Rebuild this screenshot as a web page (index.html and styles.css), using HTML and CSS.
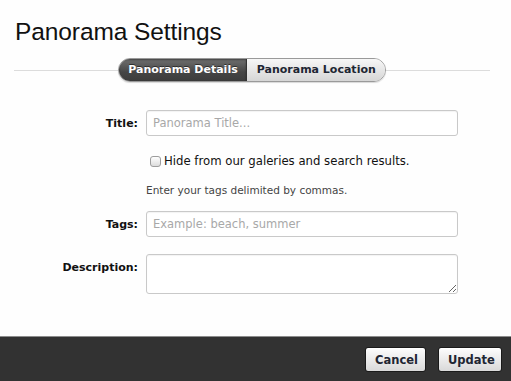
FILE: index.html
```html
<!DOCTYPE html>
<html>
<head>
<meta charset="utf-8">
<link rel="stylesheet" href="styles.css">
</head>
<body>
<div class="dialog">
  <div class="main">
    <h1 class="title">Panorama Settings</h1>
    <div class="tabrow">
      <div class="line"></div>
      <div class="tabs">
        <div class="tab active">Panorama Details</div>
        <div class="tab">Panorama Location</div>
      </div>
      <div class="line"></div>
    </div>
    <form class="form">
      <label class="lbl lbl-mid">Title:</label>
      <input class="field" type="text" placeholder="Panorama Title...">
      <div></div>
      <label class="check"><input type="checkbox" class="cb"><span>Hide from our galeries and search results.</span></label>
      <div></div>
      <div class="hint">Enter your tags delimited by commas.</div>
      <label class="lbl lbl-mid">Tags:</label>
      <input class="field" type="text" placeholder="Example: beach, summer">
      <label class="lbl lbl-top">Description:</label>
      <textarea class="field area"></textarea>
    </form>
  </div>
  <div class="footer">
    <button class="btn" type="button">Cancel</button>
    <button class="btn" type="button">Update</button>
  </div>
</div>
</body>
</html>
```

FILE: styles.css
```css
html, body {
  margin: 0;
  padding: 0;
  background: #fefefe;
}
.dialog {
  width: 511px;
  height: 381px;
  display: flex;
  flex-direction: column;
  overflow: hidden;
}
.main {
  flex: 1;
  background: #fefefe;
  display: flex;
  flex-direction: column;
}
.title {
  margin: 0;
  padding: 17px 0 0 15px;
  font-family: "Liberation Sans", Arial, sans-serif;
  font-weight: normal;
  font-size: 24.5px;
  line-height: 30px;
  color: #111;
  letter-spacing: -0.1px;
}
.tabrow {
  display: flex;
  align-items: center;
  margin-top: 11px;
  padding: 0 21px 0 14px;
}
.line {
  flex: 1;
  height: 1px;
  background: #dcdcdc;
}
.tabs {
  display: flex;
  height: 24px;
  border-radius: 12px;
  overflow: hidden;
  border: 1px solid #9a9a9a;
  box-sizing: border-box;
  box-shadow: 0 1px 1px rgba(0,0,0,0.15);
}
.tab {
  font-family: "DejaVu Sans", Verdana, sans-serif;
  font-weight: bold;
  font-size: 11px;
  line-height: 22px;
  padding: 0 9px 0 10px;
  color: #1e2633;
  background: linear-gradient(#f7f7f7, #d6d6d6);
}
.tab.active {
  color: #fff;
  background: linear-gradient(#707070, #454545 60%, #3c3c3c);
  text-shadow: 0 -1px 0 rgba(0,0,0,0.5);
  box-shadow: inset 0 1px 2px rgba(0,0,0,0.4);
  border-right: 1px solid #333;
  padding: 0 8px 0 9px;
}
.form {
  display: grid;
  grid-template-columns: 138px 312px;
  column-gap: 8px;
  margin-top: 28px;
  align-items: center;
}
.lbl {
  text-align: right;
  font-family: "DejaVu Sans", Verdana, sans-serif;
  font-weight: bold;
  font-size: 11px;
  color: #111;
}
.lbl-top {
  align-self: start;
  margin-top: 24px;
}
.field {
  box-sizing: border-box;
  width: 312px;
  height: 26px;
  margin: 0;
  border: 1px solid #c9c9c9;
  border-radius: 3px;
  padding: 0 6px;
  font-family: "DejaVu Sans", Verdana, sans-serif;
  font-size: 11.5px;
  color: #333;
  background: #fff;
  box-shadow: inset 0 1px 1px rgba(0,0,0,0.05);
  outline: none;
}
.field::placeholder {
  color: #a8a8a8;
}
.area {
  height: 40px;
  resize: vertical;
  margin-top: 17px;
  align-self: start;
}
.check {
  display: flex;
  align-items: center;
  gap: 3px;
  padding-left: 4px;
  margin-top: 18px;
  font-family: "DejaVu Sans", Verdana, sans-serif;
  font-size: 11.7px;
  color: #111;
  height: 14px;
}
.cb {
  -webkit-appearance: none;
  appearance: none;
  width: 11px;
  height: 11px;
  margin: 0;
  border: 1px solid #9d9d9d;
  border-radius: 3px;
  background: linear-gradient(#fff, #dcdcdc);
  box-sizing: border-box;
}
.hint {
  font-family: "DejaVu Sans", Verdana, sans-serif;
  font-size: 10.5px;
  color: #444;
  margin-top: 16px;
  margin-bottom: 14px;
  line-height: 13px;
}
.footer {
  height: 45px;
  box-sizing: border-box;
  border-top: 1px solid #8c8c8c;
  background: #323232;
  display: flex;
  justify-content: flex-end;
  align-items: flex-start;
  gap: 12px;
  padding: 10px 9px 0 0;
}
.btn {
  height: 25px;
  margin: 0;
  padding: 0 9px;
  border: 1px solid #1a1a1a;
  border-radius: 3px;
  background: linear-gradient(#fdfdfd, #d9d9d9);
  box-shadow: inset 0 1px 0 #fff;
  font-family: "DejaVu Sans", Verdana, sans-serif;
  font-weight: bold;
  font-size: 11.5px;
  color: #1e2633;
}
.btn:first-child {
  width: 61px;
}
.btn:last-child {
  width: 64px;
}
```
